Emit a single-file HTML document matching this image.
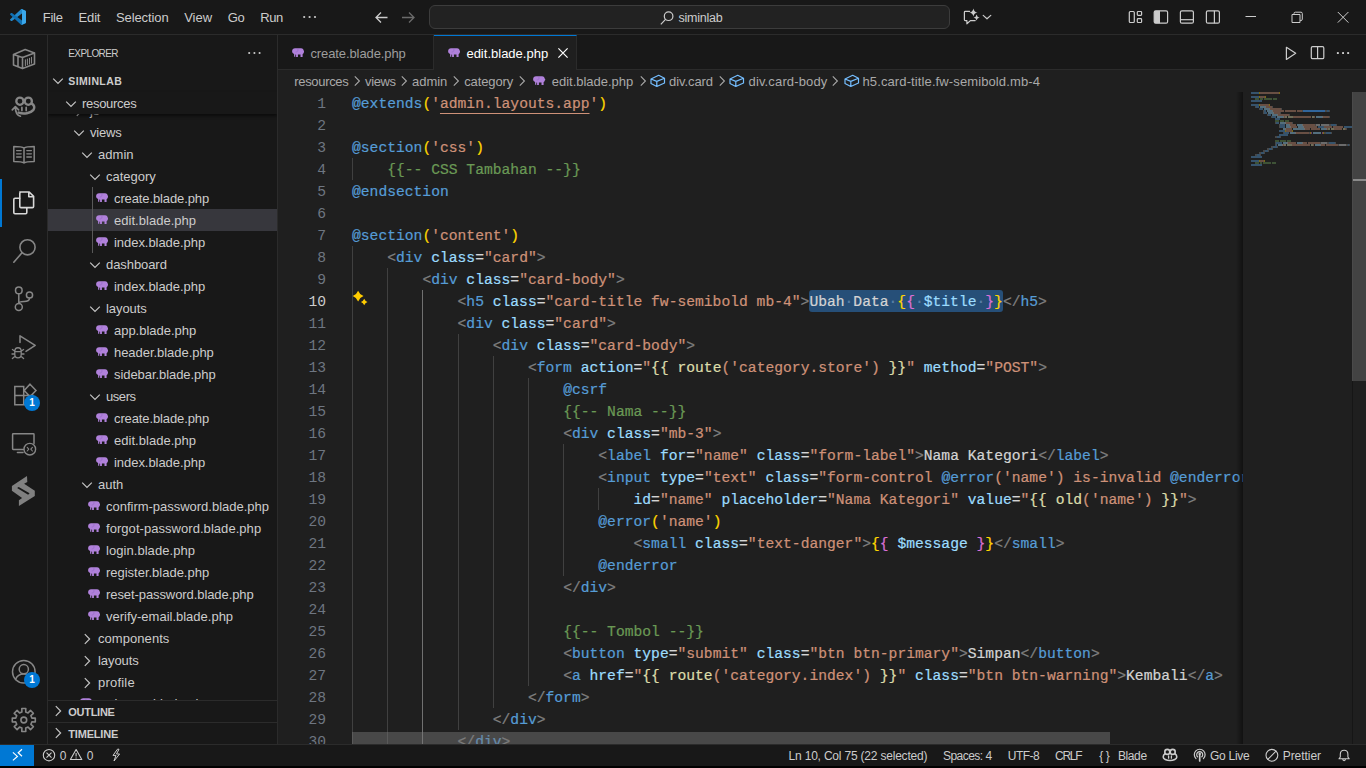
<!DOCTYPE html>
<html lang="en"><head><meta charset="utf-8"><title>edit.blade.php - siminlab - Visual Studio Code</title>
<style>
*{box-sizing:border-box}
html,body{margin:0;padding:0}
body{width:1366px;height:768px;overflow:hidden;background:#181818;position:relative;font-family:"Liberation Sans",sans-serif;font-size:13px;color:#cccccc;-webkit-font-smoothing:antialiased}
.abs{position:absolute}
svg{display:block}
/* title bar */
#title{position:absolute;left:0;top:0;width:1366px;height:35px;background:#181818;border-bottom:1px solid #2b2b2b}
#title .menu{position:absolute;top:0;height:34px;line-height:34px;color:#cccccc;font-size:13px;white-space:pre}
#cmd{position:absolute;left:429px;top:5px;width:521px;height:24px;border:1px solid #3c3c3c;border-radius:6px;background:#222222}
#cmd{line-height:24px;color:#cccccc}
/* activity bar */
#act{position:absolute;left:0;top:35px;width:48px;height:709px;background:#181818;border-right:1px solid #2b2b2b}
#act .it{position:absolute;left:0;width:48px;height:48px}
#act .it svg{position:absolute;left:12px;top:12px;width:24px;height:24px}
.badge{position:absolute;width:16px;height:16px;border-radius:8px;background:#0078d4;color:#fff;font-size:10px;font-weight:bold;line-height:16px;text-align:center}
/* sidebar */
#side{position:absolute;left:48px;top:35px;width:230px;height:709px;background:#181818;border-right:1px solid #2b2b2b;overflow:hidden}
.trow{position:absolute;left:0;width:229px;height:22px;line-height:22px;white-space:pre;color:#cccccc}
.trow.selrow{background:#37373d}
.trow span{position:absolute;top:0}
.tchev svg,.chev{width:16px;height:16px}
.tchev{top:3.5px !important}
.tico{top:6px !important}
.ele{width:12.5px;height:9.2px}
.tlabel{font-size:13px}
.hdr{position:absolute;font-size:11px;font-weight:bold;color:#cccccc;white-space:pre;transform-origin:0 50%}
.t{position:absolute;top:0;white-space:pre}
.hrow{position:absolute;left:0;width:229px;white-space:pre}
#treeclip{position:absolute;left:0;top:0;width:229px;height:665px;overflow:hidden}
#sticky{position:absolute;left:0;top:57px;width:229px;height:22px;background:#181818;box-shadow:0 2px 3px rgba(0,0,0,.55)}
.menus{position:absolute;left:0;top:1px;height:34px;line-height:34px;color:#cccccc}
/* tabs */
#tabs{position:absolute;left:278px;top:35px;width:1088px;height:35px;background:#181818;border-bottom:1px solid #2b2b2b}
.tab{position:absolute;top:0;height:35px;border-right:1px solid #2b2b2b;line-height:37px;white-space:pre}
.tab.active{background:#1f1f1f;border-top:1px solid #0078d4;height:36px;color:#ffffff}
.tab span{position:absolute;top:0}
/* breadcrumbs */
#crumbs{position:absolute;left:278px;top:70px;width:1088px;height:22px;background:#1f1f1f;line-height:24px;color:#a9a9a9;white-space:pre}
#crumbs span{position:absolute;top:0}
#crumbs svg{position:absolute}
/* editor */
#editor{position:absolute;left:278px;top:92px;width:1088px;height:652px;background:#1f1f1f;overflow:hidden}
.row{position:absolute;left:0;width:965px;height:22px;line-height:22px;overflow:hidden;font-family:"Liberation Mono",monospace;font-size:14.66px;white-space:pre;-webkit-text-stroke:.22px}
.ln{position:absolute;left:0;top:1px;width:48px;text-align:right;color:#6e7681;-webkit-text-stroke:0}
.ln.act{color:#cccccc}
.code{position:absolute;top:1px}
.ig{position:absolute;top:0;width:1px;height:22px;background:#404040}
.iga{background:#707070}
.selbg{position:absolute;top:0;height:22px;background:#264f78;border-radius:3px}
.ws{font-style:normal;color:#5a7fa6}
.ul{text-decoration:underline;text-decoration-thickness:1px;text-underline-offset:5px}
.mm{position:absolute;left:973px;top:0}
#vtrack{position:absolute;left:1074px;top:0;width:1px;height:652px;background:#161616}
#vscroll{position:absolute;left:1074px;top:0;width:14px;height:289px;background:#434343;border-left:1px solid #4a4a4a}
#vmark{position:absolute;left:1075px;top:87px;width:13px;height:2px;background:#8a8a8a}
#mmshadow{position:absolute;left:958px;top:0;width:7px;height:652px;background:linear-gradient(90deg,rgba(0,0,0,0),rgba(0,0,0,.45))}
#hscroll{position:absolute;left:74px;top:640px;width:758px;height:12px;background:rgba(121,121,121,.46)}
/* status */
#status{position:absolute;left:0;top:744px;width:1366px;height:22px;background:#181818;border-top:1px solid #2b2b2b;font-size:12px;line-height:23px;color:#cccccc;white-space:pre}
#status span{position:absolute;top:0}
#status svg{position:absolute}
#remote{position:absolute;left:0;top:0;width:34px;height:21px;background:#0078d4}
#bottom{position:absolute;left:0;top:766px;width:1366px;height:2px;background:#000}
</style></head><body>

<div id="title">
  <svg class="abs" style="left:10px;top:9px" width="16" height="16" viewBox="0 0 100 100"><path fill="#2489ca" d="M96.5 10.8 75.9 .9c-2.4-1.2-5.200-.7-7.100 1.200L1.500 63.500c-1.800 1.700-1.800 4.500 0 6.200l5.500 5c1.500 1.300 3.700 1.400 5.300 .2l81.100-61.500c2.700-2.100 6.600-.1 6.600 3.300v-.2c0-2.400-1.400-4.600-3.500-5.700z"/><path fill="#1070b3" d="M96.500 89.200 75.900 99.100c-2.400 1.200-5.200 .7-7.100-1.200L1.500 36.500c-1.800-1.700-1.800-4.500 0-6.200l5.500-5c1.500-1.300 3.700-1.400 5.300-.2l81.100 61.500c2.700 2.100 6.600 .1 6.600-3.300v.2c0 2.400-1.400 4.600-3.500 5.700z"/><path fill="#3aa7ea" d="M75.900 99.100c-2.400 1.200-5.200 .7-7.100-1.200 2.300 2.300 6.300 .7 6.300-2.600V4.700c0-3.300-4-4.900-6.300-2.600 1.900-1.900 4.700-2.400 7.100-1.200l20.600 9.900c2.200 1 3.500 3.200 3.500 5.600v67.200c0 2.400-1.400 4.600-3.500 5.600z"/></svg>
  <div class="menus"><span class="t" style="left:42.8px;font-size:13px;font-weight:normal;letter-spacing:-0.263px;">File</span><span class="t" style="left:78.6px;font-size:13px;font-weight:normal;letter-spacing:-0.177px;">Edit</span><span class="t" style="left:116px;font-size:13px;font-weight:normal;letter-spacing:-0.109px;">Selection</span><span class="t" style="left:184.2px;font-size:13px;font-weight:normal;letter-spacing:-0.038px;">View</span><span class="t" style="left:227.7px;font-size:13px;font-weight:normal;letter-spacing:-0.322px;">Go</span><span class="t" style="left:260.3px;font-size:13px;font-weight:normal;letter-spacing:-0.486px;">Run</span></div>
  <svg class="abs" style="left:302px;top:15px" width="16" height="4" viewBox="0 0 16 4"><circle cx="2.200" cy="2" r="1.100" fill="#ccc"/><circle cx="7.600" cy="2" r="1.100" fill="#ccc"/><circle cx="13" cy="2" r="1.100" fill="#ccc"/></svg>
  <svg class="abs" style="left:372px;top:10px" width="60" height="16" viewBox="372 10 60 16" fill="none" stroke-width="1.300"><path stroke="#cccccc" d="M387.500 17.500H376.500M381 12.500l-5 5 5 5"/><path stroke="#6b6b6b" d="M402 17.500H413.500M409 12.500l5 5-5 5"/></svg>
  <div id="cmd"><svg class="abs" style="left:229px;top:4px" width="16" height="16" viewBox="0 0 16 16" fill="none" stroke="#cccccc" stroke-width="1.200"><circle cx="9.600" cy="6.200" r="4.300"/><path d="M6.500 9.400 1.800 14.400"/></svg><span class="t" style="left:248.5px;font-size:12.5px;font-weight:normal;letter-spacing:-0.232px;">siminlab</span></div>
  <svg class="abs" style="left:960px;top:6px" width="36" height="22" viewBox="960 6 36 22" fill="none" stroke="#cccccc" stroke-width="1.2" stroke-linejoin="round" stroke-linecap="round"><path d="M969.6 11.4H965.2Q964.4 11.4 964.4 12.2V19.800Q964.4 20.600 965.2 20.600H966.9V23.800L970.400 20.600H975.2"/><path fill="#cccccc" stroke="none" d="M973.4 8.40Q973.97 11.93 977.50 12.5Q973.97 13.07 973.4 16.60Q972.83 13.07 969.30 12.5Q972.83 11.93 973.4 8.40ZM976.6 14.50Q977.02 17.08 979.60 17.5Q977.02 17.92 976.6 20.50Q976.18 17.92 973.60 17.5Q976.18 17.08 976.6 14.50Z"/><path d="M983.2 15.400 987 18.800 990.800 15.400"/></svg>
  <svg class="abs" style="left:1126px;top:8px" width="98" height="18" viewBox="1126 8 98 18" fill="none" stroke="#cccccc" stroke-width="1.200"><rect x="1129.300" y="11.500" width="5" height="11" rx="1"/><rect x="1137.300" y="11.500" width="4.300" height="3.800" rx=".8"/><rect x="1137.300" y="18.700" width="4.300" height="3.800" rx=".8"/>
  <rect x="1154.200" y="10.800" width="13.400" height="12.400" rx="1.500"/><path fill="#cccccc" stroke="none" d="M1154.200 12.300Q1154.200 10.800 1155.700 10.800H1160V23.200H1155.700Q1154.200 23.200 1154.200 21.700Z"/>
  <rect x="1180.400" y="10.800" width="13" height="12.400" rx="1.500"/><path d="M1180.400 19.700H1193.400"/>
  <rect x="1206.400" y="10.800" width="13" height="12.400" rx="1.500"/><path d="M1214.400 10.800V23.200"/></svg>
  <svg class="abs" style="left:1240px;top:8px" width="116" height="18" viewBox="1240 8 116 18" fill="none" stroke="#cccccc" stroke-width="1"><path d="M1245.500 16.500H1256"/><path d="M1292 14.500H1300V22.500H1292Z M1294 14.300V13.500Q1294 12.200 1295.300 12.200H1301Q1302.300 12.200 1302.300 13.500V19.200Q1302.300 20.500 1301 20.500H1300.200" stroke-linejoin="round"/><path d="M1337.800 12 1348.400 22.600M1348.400 12 1337.800 22.600"/></svg>
</div>

<div id="act"><div class="abs" style="left:0;top:144px;width:2px;height:48px;background:#0078d4"></div><svg class="abs" style="left:0;top:0" width="48" height="709" viewBox="0 35 48 709" fill="none" stroke="#868686" stroke-width="1.5" stroke-linejoin="round" stroke-linecap="round">
<!-- container -->
<path d="M13.5 54.6 25.2 49.6 34.5 52.9 34.5 63.9 22.5 68.6 13.5 65.1Z M13.5 54.6 22.5 57.4 34.5 52.9 M22.5 57.4V68.6 M18 56.2V66.8" stroke-width="1.6"/>
<path d="M25.4 59.8V65.4 M27.4 59V64.7 M29.5 58.2V63.9 M31.5 57.4V63.1" stroke-width="1.1"/>
<!-- copilot w/ arrow -->
<circle cx="19.9" cy="101.2" r="3.6" stroke-width="2.300"/><circle cx="28.3" cy="101.2" r="3.6" stroke-width="2.300"/>
<path d="M21.9 107.4V110.6 M26.2 107.4V110.6" stroke-width="1.7"/>
<path d="M31.8 103.6C34.2 105 35 107.600 33.500 109.800 30.800 113.400 23.500 114.200 18.600 112.600" stroke-width="2.500"/>
<path d="M12.300 109.800 15.400 106.700 18.600 109.800 M15.400 107C15.400 112 16.800 115.300 20.400 116.200" stroke-width="1.7"/>
<!-- book -->
<path d="M24 148.200V162.600 M24 148.200C22.500 147 20 146.600 13.800 146.600V161.400C20 161.400 22.500 161.700 24 163 25.500 161.700 28 161.400 34.200 161.400V146.600C28 146.600 25.500 147 24 148.200Z" stroke-width="1.5"/>
<path d="M16.600 150.600H21.200 M16.600 153.800H21.200 M16.600 157H21.200 M26.800 150.600H31.400 M26.800 153.800H31.400 M26.800 157H31.400" stroke-width="1.3"/>
<!-- files (active) -->
<g stroke="#d7d7d7" stroke-width="1.6">
<path d="M19.800 192H29.200L33.600 196.400V206.400Q33.600 207.600 32.400 207.600H21Q19.800 207.600 19.800 206.400V193.200Q19.800 192 21 192Z M28.800 192.200V196.800H33.400"/>
<path d="M19.600 198.200H15Q13.800 198.200 13.800 199.400V212.600Q13.800 213.800 15 213.800H25.600Q26.800 213.800 26.800 212.600V207.800"/>
</g>
<!-- search -->
<circle cx="27.500" cy="247.300" r="7.600" stroke-width="1.600"/><path d="M22 252.800 13.800 262.200" stroke-width="1.600"/>
<!-- source control -->
<circle cx="18.800" cy="290.400" r="3.300"/><circle cx="29.500" cy="295" r="3.100"/><circle cx="18.800" cy="307" r="3.500"/>
<path d="M18.800 293.800V303.400 M29.500 298.200C29.500 301 27 301.400 24 301.400 21 301.400 18.800 302 18.800 303.400"/>
<!-- debug -->
<path d="M20 342.500V335.800L35.200 345.300 26 351.400" stroke-width="1.500"/>
<path d="M14.800 351.500C14.800 346.500 21.200 346.500 21.200 351.500V354.500C21.200 359 14.800 359 14.800 354.500Z M14.800 351.600H21.200 M12.400 349.500 14.600 351 M23.600 349.500 21.400 351 M12 354H14.600 M24 354H21.400 M12.400 358.500 14.800 356.500 M23.600 358.500 21.200 356.500" stroke-width="1.300"/>
<!-- extensions -->
<path d="M14.800 386.600H23.700V395.600H14.800Z M14.800 395.600V404.800H23.700V395.600 M23.700 395.600H32.800V404.800H23.700 M30 384.200 36 390.400 30 396.600 24.200 390.400Z" stroke-width="1.500" stroke-linejoin="miter"/>
<!-- remote explorer -->
<path d="M23.500 449.400H13.200Q12.600 449.400 12.600 448.800V434.400Q12.600 433.800 13.200 433.800H33.400Q34 433.800 34 434.400V443.500 M17.400 452.600H23" stroke-width="1.500"/>
<circle cx="29.800" cy="449.200" r="5.800" stroke-width="1.400"/>
<path d="M27.200 447.400 28.800 449.200 27.200 451 M32.400 447.400 30.800 449.200 32.400 451" stroke-width="1.100"/>
<!-- S logo -->
<path fill="#808080" stroke="none" d="M27 476 27.300 482 24.100 483.800 34.800 490.800 34.800 496 18.900 505.900 18.900 500.200 22.100 498.100 11.900 490.800 11.900 486.100Z M17.100 488 28.100 494.700 29.600 493.200 18.700 486.900Z" fill-rule="evenodd"/>
<!-- account -->
<circle cx="23.800" cy="671.800" r="11.300" stroke-width="1.500"/><circle cx="23.800" cy="669.200" r="4.600" stroke-width="1.500"/>
<path d="M15.500 679.500C17 675.800 20 674 23.800 674 27.600 674 30.600 675.800 32.100 679.500" stroke-width="1.500"/>
<!-- gear -->
<circle cx="23.800" cy="720" r="2.900" stroke-width="1.600"/>
<path id="gear" stroke-width="1.600" stroke-linejoin="round" d="M21.9 711.9 L21.8 708.5 L25.8 708.5 L25.7 711.9 L28.1 712.9 L30.5 710.4 L33.4 713.3 L30.9 715.7 L31.9 718.1 L35.3 718.0 L35.3 722.0 L31.9 721.9 L30.9 724.3 L33.4 726.7 L30.5 729.6 L28.1 727.1 L25.7 728.1 L25.8 731.5 L21.8 731.5 L21.9 728.1 L19.5 727.1 L17.1 729.6 L14.2 726.7 L16.7 724.3 L15.7 721.9 L12.3 722.0 L12.3 718.0 L15.7 718.1 L16.7 715.7 L14.2 713.3 L17.1 710.4 L19.5 712.9Z"/>
</svg>

<div class="badge" style="left:24px;top:360px">1</div><div class="badge" style="left:24px;top:637px">1</div></div>

<div id="side">
  <div id="treeclip">
<div class="trow" style="top:64px"><span class="tchev" style="left:22.5px"><svg class="chev" viewBox="0 0 16 16"><path fill="none" stroke="#c5c5c5" stroke-width="1.2" d="M5.8 3.2 10.6 8l-4.8 4.8"/></svg></span><span class="t" style="left:42px;font-size:13px;font-weight:normal;letter-spacing:0.055px;top:1px">js</span></div>
<div class="trow" style="top:86px"><span class="tchev" style="left:22.5px"><svg class="chev" viewBox="0 0 16 16"><path fill="none" stroke="#c5c5c5" stroke-width="1.2" d="M3.2 5.6 8 10.4l4.8-4.8"/></svg></span><span class="t" style="left:42px;font-size:13px;font-weight:normal;letter-spacing:-0.203px;top:1px">views</span></div>
<div class="trow" style="top:108px"><span class="tchev" style="left:30.5px"><svg class="chev" viewBox="0 0 16 16"><path fill="none" stroke="#c5c5c5" stroke-width="1.2" d="M3.2 5.6 8 10.4l4.8-4.8"/></svg></span><span class="t" style="left:50px;font-size:13px;font-weight:normal;letter-spacing:0.036px;top:1px">admin</span></div>
<div class="trow" style="top:130px"><span class="tchev" style="left:38.5px"><svg class="chev" viewBox="0 0 16 16"><path fill="none" stroke="#c5c5c5" stroke-width="1.2" d="M3.2 5.6 8 10.4l4.8-4.8"/></svg></span><span class="t" style="left:58px;font-size:13px;font-weight:normal;letter-spacing:-0.022px;top:1px">category</span></div>
<div class="trow" style="top:152px"><span class="tico" style="left:47.5px"><svg class="ele" viewBox="0 0 12.5 9" preserveAspectRatio="none"><path fill="#b081db" d="M3 .2H9C10.8 .2 11.6 1.4 11.8 2.8L12.4 3.6 11.8 4.4C11.6 5.2 11.2 5.8 10.6 6.2V8.8H8.5V6.4H5.9V8.8H4.1V6.5L3.3 6.3V8.5H2.1V5.9C.9 5.3 .1 4.3 .1 3.1 .1 1.5 1.4 .2 3 .2Z"/><path fill="none" stroke="#9166c2" stroke-width=".55" d="M5.9 1C6.3 2.6 5.8 3.9 3.6 4"/></svg></span><span class="t" style="left:66px;font-size:13px;font-weight:normal;letter-spacing:-0.116px;top:1px">create.blade.php</span></div>
<div class="trow selrow" style="top:174px"><span class="tico" style="left:47.5px"><svg class="ele" viewBox="0 0 12.5 9" preserveAspectRatio="none"><path fill="#b081db" d="M3 .2H9C10.8 .2 11.6 1.4 11.8 2.8L12.4 3.6 11.8 4.4C11.6 5.2 11.2 5.8 10.6 6.2V8.8H8.5V6.4H5.9V8.8H4.1V6.5L3.3 6.3V8.5H2.1V5.9C.9 5.3 .1 4.3 .1 3.1 .1 1.5 1.4 .2 3 .2Z"/><path fill="none" stroke="#9166c2" stroke-width=".55" d="M5.9 1C6.3 2.6 5.8 3.9 3.6 4"/></svg></span><span class="t" style="left:66px;font-size:13px;font-weight:normal;letter-spacing:0.029px;top:1px">edit.blade.php</span></div>
<div class="trow" style="top:196px"><span class="tico" style="left:47.5px"><svg class="ele" viewBox="0 0 12.5 9" preserveAspectRatio="none"><path fill="#b081db" d="M3 .2H9C10.8 .2 11.6 1.4 11.8 2.8L12.4 3.6 11.8 4.4C11.6 5.2 11.2 5.8 10.6 6.2V8.8H8.5V6.4H5.9V8.8H4.1V6.5L3.3 6.3V8.5H2.1V5.9C.9 5.3 .1 4.3 .1 3.1 .1 1.5 1.4 .2 3 .2Z"/><path fill="none" stroke="#9166c2" stroke-width=".55" d="M5.9 1C6.3 2.6 5.8 3.9 3.6 4"/></svg></span><span class="t" style="left:66px;font-size:13px;font-weight:normal;letter-spacing:-0.048px;top:1px">index.blade.php</span></div>
<div class="trow" style="top:218px"><span class="tchev" style="left:38.5px"><svg class="chev" viewBox="0 0 16 16"><path fill="none" stroke="#c5c5c5" stroke-width="1.2" d="M3.2 5.6 8 10.4l4.8-4.8"/></svg></span><span class="t" style="left:58px;font-size:13px;font-weight:normal;letter-spacing:-0.073px;top:1px">dashboard</span></div>
<div class="trow" style="top:240px"><span class="tico" style="left:47.5px"><svg class="ele" viewBox="0 0 12.5 9" preserveAspectRatio="none"><path fill="#b081db" d="M3 .2H9C10.8 .2 11.6 1.4 11.8 2.8L12.4 3.6 11.8 4.4C11.6 5.2 11.2 5.8 10.6 6.2V8.8H8.5V6.4H5.9V8.8H4.1V6.5L3.3 6.3V8.5H2.1V5.9C.9 5.3 .1 4.3 .1 3.1 .1 1.5 1.4 .2 3 .2Z"/><path fill="none" stroke="#9166c2" stroke-width=".55" d="M5.9 1C6.3 2.6 5.8 3.9 3.6 4"/></svg></span><span class="t" style="left:66px;font-size:13px;font-weight:normal;letter-spacing:-0.048px;top:1px">index.blade.php</span></div>
<div class="trow" style="top:262px"><span class="tchev" style="left:38.5px"><svg class="chev" viewBox="0 0 16 16"><path fill="none" stroke="#c5c5c5" stroke-width="1.2" d="M3.2 5.6 8 10.4l4.8-4.8"/></svg></span><span class="t" style="left:58px;font-size:13px;font-weight:normal;letter-spacing:-0.058px;top:1px">layouts</span></div>
<div class="trow" style="top:284px"><span class="tico" style="left:47.5px"><svg class="ele" viewBox="0 0 12.5 9" preserveAspectRatio="none"><path fill="#b081db" d="M3 .2H9C10.8 .2 11.6 1.4 11.8 2.8L12.4 3.6 11.8 4.4C11.6 5.2 11.2 5.8 10.6 6.2V8.8H8.5V6.4H5.9V8.8H4.1V6.5L3.3 6.3V8.5H2.1V5.9C.9 5.3 .1 4.3 .1 3.1 .1 1.5 1.4 .2 3 .2Z"/><path fill="none" stroke="#9166c2" stroke-width=".55" d="M5.9 1C6.3 2.6 5.8 3.9 3.6 4"/></svg></span><span class="t" style="left:66px;font-size:13px;font-weight:normal;letter-spacing:-0.025px;top:1px">app.blade.php</span></div>
<div class="trow" style="top:306px"><span class="tico" style="left:47.5px"><svg class="ele" viewBox="0 0 12.5 9" preserveAspectRatio="none"><path fill="#b081db" d="M3 .2H9C10.8 .2 11.6 1.4 11.8 2.8L12.4 3.6 11.8 4.4C11.6 5.2 11.2 5.8 10.6 6.2V8.8H8.5V6.4H5.9V8.8H4.1V6.5L3.3 6.3V8.5H2.1V5.9C.9 5.3 .1 4.3 .1 3.1 .1 1.5 1.4 .2 3 .2Z"/><path fill="none" stroke="#9166c2" stroke-width=".55" d="M5.9 1C6.3 2.6 5.8 3.9 3.6 4"/></svg></span><span class="t" style="left:66px;font-size:13px;font-weight:normal;letter-spacing:-0.043px;top:1px">header.blade.php</span></div>
<div class="trow" style="top:328px"><span class="tico" style="left:47.5px"><svg class="ele" viewBox="0 0 12.5 9" preserveAspectRatio="none"><path fill="#b081db" d="M3 .2H9C10.8 .2 11.6 1.4 11.8 2.8L12.4 3.6 11.8 4.4C11.6 5.2 11.2 5.8 10.6 6.2V8.8H8.5V6.4H5.9V8.8H4.1V6.5L3.3 6.3V8.5H2.1V5.9C.9 5.3 .1 4.3 .1 3.1 .1 1.5 1.4 .2 3 .2Z"/><path fill="none" stroke="#9166c2" stroke-width=".55" d="M5.9 1C6.3 2.6 5.8 3.9 3.6 4"/></svg></span><span class="t" style="left:66px;font-size:13px;font-weight:normal;letter-spacing:-0.062px;top:1px">sidebar.blade.php</span></div>
<div class="trow" style="top:350px"><span class="tchev" style="left:38.5px"><svg class="chev" viewBox="0 0 16 16"><path fill="none" stroke="#c5c5c5" stroke-width="1.2" d="M3.2 5.6 8 10.4l4.8-4.8"/></svg></span><span class="t" style="left:58px;font-size:13px;font-weight:normal;letter-spacing:-0.439px;top:1px">users</span></div>
<div class="trow" style="top:372px"><span class="tico" style="left:47.5px"><svg class="ele" viewBox="0 0 12.5 9" preserveAspectRatio="none"><path fill="#b081db" d="M3 .2H9C10.8 .2 11.6 1.4 11.8 2.8L12.4 3.6 11.8 4.4C11.6 5.2 11.2 5.8 10.6 6.2V8.8H8.5V6.4H5.9V8.8H4.1V6.5L3.3 6.3V8.5H2.1V5.9C.9 5.3 .1 4.3 .1 3.1 .1 1.5 1.4 .2 3 .2Z"/><path fill="none" stroke="#9166c2" stroke-width=".55" d="M5.9 1C6.3 2.6 5.8 3.9 3.6 4"/></svg></span><span class="t" style="left:66px;font-size:13px;font-weight:normal;letter-spacing:-0.116px;top:1px">create.blade.php</span></div>
<div class="trow" style="top:394px"><span class="tico" style="left:47.5px"><svg class="ele" viewBox="0 0 12.5 9" preserveAspectRatio="none"><path fill="#b081db" d="M3 .2H9C10.8 .2 11.6 1.4 11.8 2.8L12.4 3.6 11.8 4.4C11.6 5.2 11.2 5.8 10.6 6.2V8.8H8.5V6.4H5.9V8.8H4.1V6.5L3.3 6.3V8.5H2.1V5.9C.9 5.3 .1 4.3 .1 3.1 .1 1.5 1.4 .2 3 .2Z"/><path fill="none" stroke="#9166c2" stroke-width=".55" d="M5.9 1C6.3 2.6 5.8 3.9 3.6 4"/></svg></span><span class="t" style="left:66px;font-size:13px;font-weight:normal;letter-spacing:0.029px;top:1px">edit.blade.php</span></div>
<div class="trow" style="top:416px"><span class="tico" style="left:47.5px"><svg class="ele" viewBox="0 0 12.5 9" preserveAspectRatio="none"><path fill="#b081db" d="M3 .2H9C10.8 .2 11.6 1.4 11.8 2.8L12.4 3.6 11.8 4.4C11.6 5.2 11.2 5.8 10.6 6.2V8.8H8.5V6.4H5.9V8.8H4.1V6.5L3.3 6.3V8.5H2.1V5.9C.9 5.3 .1 4.3 .1 3.1 .1 1.5 1.4 .2 3 .2Z"/><path fill="none" stroke="#9166c2" stroke-width=".55" d="M5.9 1C6.3 2.6 5.8 3.9 3.6 4"/></svg></span><span class="t" style="left:66px;font-size:13px;font-weight:normal;letter-spacing:-0.048px;top:1px">index.blade.php</span></div>
<div class="trow" style="top:438px"><span class="tchev" style="left:30.5px"><svg class="chev" viewBox="0 0 16 16"><path fill="none" stroke="#c5c5c5" stroke-width="1.2" d="M3.2 5.6 8 10.4l4.8-4.8"/></svg></span><span class="t" style="left:50px;font-size:13px;font-weight:normal;letter-spacing:-0.028px;top:1px">auth</span></div>
<div class="trow" style="top:460px"><span class="tico" style="left:39.5px"><svg class="ele" viewBox="0 0 12.5 9" preserveAspectRatio="none"><path fill="#b081db" d="M3 .2H9C10.8 .2 11.6 1.4 11.8 2.8L12.4 3.6 11.8 4.4C11.6 5.2 11.2 5.8 10.6 6.2V8.8H8.5V6.4H5.9V8.8H4.1V6.5L3.3 6.3V8.5H2.1V5.9C.9 5.3 .1 4.3 .1 3.1 .1 1.5 1.4 .2 3 .2Z"/><path fill="none" stroke="#9166c2" stroke-width=".55" d="M5.9 1C6.3 2.6 5.8 3.9 3.6 4"/></svg></span><span class="t" style="left:58px;font-size:13px;font-weight:normal;letter-spacing:-0.016px;top:1px">confirm-password.blade.php</span></div>
<div class="trow" style="top:482px"><span class="tico" style="left:39.5px"><svg class="ele" viewBox="0 0 12.5 9" preserveAspectRatio="none"><path fill="#b081db" d="M3 .2H9C10.8 .2 11.6 1.4 11.8 2.8L12.4 3.6 11.8 4.4C11.6 5.2 11.2 5.8 10.6 6.2V8.8H8.5V6.4H5.9V8.8H4.1V6.5L3.3 6.3V8.5H2.1V5.9C.9 5.3 .1 4.3 .1 3.1 .1 1.5 1.4 .2 3 .2Z"/><path fill="none" stroke="#9166c2" stroke-width=".55" d="M5.9 1C6.3 2.6 5.8 3.9 3.6 4"/></svg></span><span class="t" style="left:58px;font-size:13px;font-weight:normal;letter-spacing:0.050px;top:1px">forgot-password.blade.php</span></div>
<div class="trow" style="top:504px"><span class="tico" style="left:39.5px"><svg class="ele" viewBox="0 0 12.5 9" preserveAspectRatio="none"><path fill="#b081db" d="M3 .2H9C10.8 .2 11.6 1.4 11.8 2.8L12.4 3.6 11.8 4.4C11.6 5.2 11.2 5.8 10.6 6.2V8.8H8.5V6.4H5.9V8.8H4.1V6.5L3.3 6.3V8.5H2.1V5.9C.9 5.3 .1 4.3 .1 3.1 .1 1.5 1.4 .2 3 .2Z"/><path fill="none" stroke="#9166c2" stroke-width=".55" d="M5.9 1C6.3 2.6 5.8 3.9 3.6 4"/></svg></span><span class="t" style="left:58px;font-size:13px;font-weight:normal;letter-spacing:0.053px;top:1px">login.blade.php</span></div>
<div class="trow" style="top:526px"><span class="tico" style="left:39.5px"><svg class="ele" viewBox="0 0 12.5 9" preserveAspectRatio="none"><path fill="#b081db" d="M3 .2H9C10.8 .2 11.6 1.4 11.8 2.8L12.4 3.6 11.8 4.4C11.6 5.2 11.2 5.8 10.6 6.2V8.8H8.5V6.4H5.9V8.8H4.1V6.5L3.3 6.3V8.5H2.1V5.9C.9 5.3 .1 4.3 .1 3.1 .1 1.5 1.4 .2 3 .2Z"/><path fill="none" stroke="#9166c2" stroke-width=".55" d="M5.9 1C6.3 2.6 5.8 3.9 3.6 4"/></svg></span><span class="t" style="left:58px;font-size:13px;font-weight:normal;letter-spacing:-0.014px;top:1px">register.blade.php</span></div>
<div class="trow" style="top:548px"><span class="tico" style="left:39.5px"><svg class="ele" viewBox="0 0 12.5 9" preserveAspectRatio="none"><path fill="#b081db" d="M3 .2H9C10.8 .2 11.6 1.4 11.8 2.8L12.4 3.6 11.8 4.4C11.6 5.2 11.2 5.8 10.6 6.2V8.8H8.5V6.4H5.9V8.8H4.1V6.5L3.3 6.3V8.5H2.1V5.9C.9 5.3 .1 4.3 .1 3.1 .1 1.5 1.4 .2 3 .2Z"/><path fill="none" stroke="#9166c2" stroke-width=".55" d="M5.9 1C6.3 2.6 5.8 3.9 3.6 4"/></svg></span><span class="t" style="left:58px;font-size:13px;font-weight:normal;letter-spacing:-0.083px;top:1px">reset-password.blade.php</span></div>
<div class="trow" style="top:570px"><span class="tico" style="left:39.5px"><svg class="ele" viewBox="0 0 12.5 9" preserveAspectRatio="none"><path fill="#b081db" d="M3 .2H9C10.8 .2 11.6 1.4 11.8 2.8L12.4 3.6 11.8 4.4C11.6 5.2 11.2 5.8 10.6 6.2V8.8H8.5V6.4H5.9V8.8H4.1V6.5L3.3 6.3V8.5H2.1V5.9C.9 5.3 .1 4.3 .1 3.1 .1 1.5 1.4 .2 3 .2Z"/><path fill="none" stroke="#9166c2" stroke-width=".55" d="M5.9 1C6.3 2.6 5.8 3.9 3.6 4"/></svg></span><span class="t" style="left:58px;font-size:13px;font-weight:normal;letter-spacing:-0.004px;top:1px">verify-email.blade.php</span></div>
<div class="trow" style="top:592px"><span class="tchev" style="left:30.5px"><svg class="chev" viewBox="0 0 16 16"><path fill="none" stroke="#c5c5c5" stroke-width="1.2" d="M5.8 3.2 10.6 8l-4.8 4.8"/></svg></span><span class="t" style="left:50px;font-size:13px;font-weight:normal;letter-spacing:0.057px;top:1px">components</span></div>
<div class="trow" style="top:614px"><span class="tchev" style="left:30.5px"><svg class="chev" viewBox="0 0 16 16"><path fill="none" stroke="#c5c5c5" stroke-width="1.2" d="M5.8 3.2 10.6 8l-4.8 4.8"/></svg></span><span class="t" style="left:50px;font-size:13px;font-weight:normal;letter-spacing:-0.058px;top:1px">layouts</span></div>
<div class="trow" style="top:636px"><span class="tchev" style="left:30.5px"><svg class="chev" viewBox="0 0 16 16"><path fill="none" stroke="#c5c5c5" stroke-width="1.2" d="M5.8 3.2 10.6 8l-4.8 4.8"/></svg></span><span class="t" style="left:50px;font-size:13px;font-weight:normal;letter-spacing:0.211px;top:1px">profile</span></div>
<div class="trow" style="top:657px"><span class="tico" style="left:31.5px"><svg class="ele" viewBox="0 0 12.5 9" preserveAspectRatio="none"><path fill="#b081db" d="M3 .2H9C10.8 .2 11.6 1.4 11.8 2.8L12.4 3.6 11.8 4.4C11.6 5.2 11.2 5.8 10.6 6.2V8.8H8.5V6.4H5.9V8.8H4.1V6.5L3.3 6.3V8.5H2.1V5.9C.9 5.3 .1 4.3 .1 3.1 .1 1.5 1.4 .2 3 .2Z"/><path fill="none" stroke="#9166c2" stroke-width=".55" d="M5.9 1C6.3 2.6 5.8 3.9 3.6 4"/></svg></span><span class="t" style="left:50px;font-size:13px;font-weight:normal;letter-spacing:-0.002px;top:1px">welcome.blade.php</span></div>
  <i class="abs" style="left:44px;top:152px;width:1px;height:66px;background:#585858"></i>
  </div>
  <div id="sticky"><div class="trow" style="top:0px"><span class="tchev" style="left:14.5px"><svg class="chev" viewBox="0 0 16 16"><path fill="none" stroke="#c5c5c5" stroke-width="1.2" d="M3.2 5.6 8 10.4l4.8-4.8"/></svg></span><span class="t" style="left:34px;font-size:13px;font-weight:normal;letter-spacing:-0.298px;top:1px">resources</span></div></div>
  <div class="hrow" style="top:0;height:35px;line-height:35px"><span class="t" style="left:20.3px;font-size:10px;font-weight:normal;letter-spacing:-0.609px;color:#cccccc;top:1px">EXPLORER</span><svg class="abs" style="left:199px;top:16px" width="16" height="4" viewBox="0 0 16 4"><circle cx="2.200" cy="2" r="1.050" fill="#ccc"/><circle cx="7.400" cy="2" r="1.050" fill="#ccc"/><circle cx="12.600" cy="2" r="1.050" fill="#ccc"/></svg></div>
  <div class="hrow" style="top:35px;height:22px;line-height:22px"><span class="abs" style="left:2px;top:3px"><svg class="chev" viewBox="0 0 16 16"><path fill="none" stroke="#c5c5c5" stroke-width="1.2" d="M3.2 5.6 8 10.4l4.8-4.8"/></svg></span><span class="t" style="left:20.3px;font-size:10.5px;font-weight:bold;letter-spacing:0.381px;">SIMINLAB</span></div>
  <div class="hrow" style="top:665px;height:22px;line-height:22px;border-top:1px solid #2b2b2b;background:#181818"><span class="abs" style="left:2px;top:2px"><svg class="chev" viewBox="0 0 16 16"><path fill="none" stroke="#c5c5c5" stroke-width="1.2" d="M5.8 3.2 10.6 8l-4.8 4.8"/></svg></span><span class="t" style="left:20.3px;font-size:11px;font-weight:bold;letter-spacing:-0.283px;top:0px">OUTLINE</span></div>
  <div class="hrow" style="top:687px;height:22px;line-height:22px;border-top:1px solid #2b2b2b;background:#181818"><span class="abs" style="left:2px;top:2px"><svg class="chev" viewBox="0 0 16 16"><path fill="none" stroke="#c5c5c5" stroke-width="1.2" d="M5.8 3.2 10.6 8l-4.8 4.8"/></svg></span><span class="t" style="left:20.3px;font-size:11px;font-weight:bold;letter-spacing:-0.193px;top:0px">TIMELINE</span></div>
</div>

<div id="tabs">
  <div class="tab" style="left:0;width:156px;color:#9d9d9d"><span class="abs" style="left:13.500px;top:13px"><svg class="ele" viewBox="0 0 12.5 9" preserveAspectRatio="none"><path fill="#b081db" d="M3 .2H9C10.8 .2 11.6 1.4 11.8 2.8L12.4 3.6 11.8 4.4C11.6 5.2 11.2 5.8 10.6 6.2V8.8H8.5V6.4H5.9V8.8H4.1V6.5L3.3 6.3V8.5H2.1V5.9C.9 5.3 .1 4.3 .1 3.1 .1 1.5 1.4 .2 3 .2Z"/><path fill="none" stroke="#9166c2" stroke-width=".55" d="M5.9 1C6.3 2.6 5.8 3.9 3.6 4"/></svg></span><span class="t" style="left:32.4px;font-size:13px;font-weight:normal;letter-spacing:-0.097px;">create.blade.php</span></div>
  <div class="tab active" style="left:156px;width:143px"><span class="abs" style="left:13.800px;top:12px"><svg class="ele" viewBox="0 0 12.5 9" preserveAspectRatio="none"><path fill="#b081db" d="M3 .2H9C10.8 .2 11.6 1.4 11.8 2.8L12.4 3.6 11.8 4.4C11.6 5.2 11.2 5.8 10.6 6.2V8.8H8.5V6.4H5.9V8.8H4.1V6.5L3.3 6.3V8.5H2.1V5.9C.9 5.3 .1 4.3 .1 3.1 .1 1.5 1.4 .2 3 .2Z"/><path fill="none" stroke="#9166c2" stroke-width=".55" d="M5.9 1C6.3 2.6 5.8 3.9 3.6 4"/></svg></span><span class="t" style="left:32.4px;font-size:13px;font-weight:normal;letter-spacing:0.008px;top:-1px">edit.blade.php</span><svg class="abs" style="left:121px;top:9px" width="16" height="16" viewBox="0 0 16 16"><path stroke="#ffffff" stroke-width="1.200" fill="none" d="M3.400 3.400 12.600 12.600M12.600 3.400 3.400 12.600"/></svg></div>
  <svg class="abs" style="left:1002px;top:8px" width="80" height="20" viewBox="1280 43 80 20" fill="none" stroke="#cccccc" stroke-width="1.200" stroke-linejoin="round"><path d="M1286.400 47.300V59.400L1295.700 53.300Z"/><rect x="1311.300" y="46.700" width="12.500" height="12" rx="1.300"/><path d="M1317.600 46.700V58.700"/><g fill="#cccccc" stroke="none"><rect x="1336.900" y="52.100" width="1.900" height="1.900"/><rect x="1342.100" y="52.100" width="1.900" height="1.900"/><rect x="1347.200" y="52.100" width="1.900" height="1.900"/></g></svg>
</div>

<div id="crumbs"><span class="t" style="left:16.2px;font-size:13px;font-weight:normal;letter-spacing:-0.309px;">resources</span><svg class="abs" style="left:70.5px;top:3px" width="16" height="16" viewBox="0 0 16 16"><path fill="none" stroke="#a9a9a9" stroke-width="1.100" d="M5.800 3.400 10.400 8l-4.600 4.600"/></svg><span class="t" style="left:87px;font-size:13px;font-weight:normal;letter-spacing:-0.363px;">views</span><svg class="abs" style="left:118px;top:3px" width="16" height="16" viewBox="0 0 16 16"><path fill="none" stroke="#a9a9a9" stroke-width="1.100" d="M5.800 3.400 10.400 8l-4.600 4.600"/></svg><span class="t" style="left:134.1px;font-size:13px;font-weight:normal;letter-spacing:-0.044px;">admin</span><svg class="abs" style="left:170.10000000000002px;top:3px" width="16" height="16" viewBox="0 0 16 16"><path fill="none" stroke="#a9a9a9" stroke-width="1.100" d="M5.800 3.400 10.400 8l-4.600 4.600"/></svg><span class="t" style="left:186.2px;font-size:13px;font-weight:normal;letter-spacing:-0.122px;">category</span><svg class="abs" style="left:236px;top:3px" width="16" height="16" viewBox="0 0 16 16"><path fill="none" stroke="#a9a9a9" stroke-width="1.100" d="M5.800 3.400 10.400 8l-4.600 4.600"/></svg><span class="abs" style="left:255.300px;top:6px"><svg class="ele" viewBox="0 0 12.5 9" preserveAspectRatio="none"><path fill="#b081db" d="M3 .2H9C10.8 .2 11.6 1.4 11.8 2.8L12.4 3.6 11.8 4.4C11.6 5.2 11.2 5.8 10.6 6.2V8.8H8.5V6.4H5.9V8.8H4.1V6.5L3.3 6.3V8.5H2.1V5.9C.9 5.3 .1 4.3 .1 3.1 .1 1.5 1.4 .2 3 .2Z"/><path fill="none" stroke="#9166c2" stroke-width=".55" d="M5.9 1C6.3 2.6 5.8 3.9 3.6 4"/></svg></span><span class="t" style="left:273.8px;font-size:13px;font-weight:normal;letter-spacing:-0.021px;">edit.blade.php</span><svg class="abs" style="left:356.6px;top:3px" width="16" height="16" viewBox="0 0 16 16"><path fill="none" stroke="#a9a9a9" stroke-width="1.100" d="M5.800 3.400 10.400 8l-4.600 4.600"/></svg><svg class="abs" style="left:372px;top:3px" width="16" height="16" viewBox="0 0 16 16" fill="none" stroke="#75beff" stroke-width="1.200" stroke-linejoin="round"><path d="M1 6 8.7 2.3 14.5 5.3V10L6.8 13.5 1 10.5Z M1 6 6.8 8.4 14.5 5.3 M6.8 8.4V13.5"/></svg><span class="t" style="left:391px;font-size:13px;font-weight:normal;letter-spacing:-0.070px;">div.card</span><svg class="abs" style="left:435.5px;top:3px" width="16" height="16" viewBox="0 0 16 16"><path fill="none" stroke="#a9a9a9" stroke-width="1.100" d="M5.800 3.400 10.400 8l-4.600 4.600"/></svg><svg class="abs" style="left:451px;top:3px" width="16" height="16" viewBox="0 0 16 16" fill="none" stroke="#75beff" stroke-width="1.200" stroke-linejoin="round"><path d="M1 6 8.7 2.3 14.5 5.3V10L6.8 13.5 1 10.5Z M1 6 6.8 8.4 14.5 5.3 M6.8 8.4V13.5"/></svg><span class="t" style="left:470.5px;font-size:13px;font-weight:normal;letter-spacing:0.148px;">div.card-body</span><svg class="abs" style="left:549px;top:3px" width="16" height="16" viewBox="0 0 16 16"><path fill="none" stroke="#a9a9a9" stroke-width="1.100" d="M5.800 3.400 10.400 8l-4.600 4.600"/></svg><svg class="abs" style="left:565.5px;top:3px" width="16" height="16" viewBox="0 0 16 16" fill="none" stroke="#75beff" stroke-width="1.200" stroke-linejoin="round"><path d="M1 6 8.7 2.3 14.5 5.3V10L6.8 13.5 1 10.5Z M1 6 6.8 8.4 14.5 5.3 M6.8 8.4V13.5"/></svg><span class="t" style="left:584.5px;font-size:13px;font-weight:normal;letter-spacing:0.113px;">h5.card-title.fw-semibold.mb-4</span></div>

<div id="editor">
<div class="row" style="top:0px"><span class="ln">1</span><span class="code" style="left:74.00px"><span style="color:#569cd6">@extends</span><span style="color:#ffd700">(</span><span style="color:#ce9178">'</span><span style="color:#ce9178" class="ul">admin.layouts.app</span><span style="color:#ce9178">'</span><span style="color:#ffd700">)</span></span></div>
<div class="row" style="top:22px"><span class="ln">2</span><span class="code" style="left:74.00px"></span></div>
<div class="row" style="top:44px"><span class="ln">3</span><span class="code" style="left:74.00px"><span style="color:#569cd6">@section</span><span style="color:#ffd700">(</span><span style="color:#ce9178">'css'</span><span style="color:#ffd700">)</span></span></div>
<div class="row" style="top:66px"><span class="ln">4</span><i class="ig" style="left:74px"></i><span class="code" style="left:109.19px"><span style="color:#6a9955">{{-- CSS Tambahan --}}</span></span></div>
<div class="row" style="top:88px"><span class="ln">5</span><span class="code" style="left:74.00px"><span style="color:#569cd6">@endsection</span></span></div>
<div class="row" style="top:110px"><span class="ln">6</span><span class="code" style="left:74.00px"></span></div>
<div class="row" style="top:132px"><span class="ln">7</span><span class="code" style="left:74.00px"><span style="color:#569cd6">@section</span><span style="color:#ffd700">(</span><span style="color:#ce9178">'content'</span><span style="color:#ffd700">)</span></span></div>
<div class="row" style="top:154px"><span class="ln">8</span><i class="ig" style="left:74px"></i><span class="code" style="left:109.19px"><span style="color:#808080">&lt;</span><span style="color:#569cd6">div</span><span style="color:#d4d4d4"> </span><span style="color:#9cdcfe">class</span><span style="color:#d4d4d4">=</span><span style="color:#ce9178">"card"</span><span style="color:#808080">&gt;</span></span></div>
<div class="row" style="top:176px"><span class="ln">9</span><i class="ig" style="left:74px"></i><i class="ig" style="left:109px"></i><span class="code" style="left:144.38px"><span style="color:#808080">&lt;</span><span style="color:#569cd6">div</span><span style="color:#d4d4d4"> </span><span style="color:#9cdcfe">class</span><span style="color:#d4d4d4">=</span><span style="color:#ce9178">"card-body"</span><span style="color:#808080">&gt;</span></span></div>
<div class="row" style="top:198px"><span class="ln act">10</span><i class="ig" style="left:74px"></i><i class="ig" style="left:109px"></i><i class="ig iga" style="left:144px"></i><i class="selbg" style="left:531.44px;width:193.53px"></i><svg style="position:absolute;left:74px;top:0" width="18" height="22" viewBox="352 290 18 22"><path fill="#ffcc00" d="M358.1 290.70000000000005Q359.61 294.59 363.5 296.1Q359.61 297.61 358.1 301.5Q356.59 297.61 352.70000000000005 296.1Q356.59 294.59 358.1 290.70000000000005ZM364.2 298.7Q365.12 301.08 367.5 302Q365.12 302.92 364.2 305.3Q363.28 302.92 360.9 302Q363.28 301.08 364.2 298.7Z"/></svg><span class="code" style="left:179.56px"><span style="color:#808080">&lt;</span><span style="color:#569cd6">h5</span><span style="color:#d4d4d4"> </span><span style="color:#9cdcfe">class</span><span style="color:#d4d4d4">=</span><span style="color:#ce9178">"card-title fw-semibold mb-4"</span><span style="color:#808080">&gt;</span><span><span style="color:#d4d4d4">Ubah<i class="ws">·</i>Data<i class="ws">·</i></span><span style="color:#ffd700">{</span><span style="color:#da70d6">{</span><i class="ws">·</i><span style="color:#9cdcfe">$title</span><i class="ws">·</i><span style="color:#da70d6">}</span><span style="color:#ffd700">}</span></span><span style="color:#808080">&lt;/</span><span style="color:#569cd6">h5</span><span style="color:#808080">&gt;</span></span></div>
<div class="row" style="top:220px"><span class="ln">11</span><i class="ig" style="left:74px"></i><i class="ig" style="left:109px"></i><i class="ig iga" style="left:144px"></i><span class="code" style="left:179.56px"><span style="color:#808080">&lt;</span><span style="color:#569cd6">div</span><span style="color:#d4d4d4"> </span><span style="color:#9cdcfe">class</span><span style="color:#d4d4d4">=</span><span style="color:#ce9178">"card"</span><span style="color:#808080">&gt;</span></span></div>
<div class="row" style="top:242px"><span class="ln">12</span><i class="ig" style="left:74px"></i><i class="ig" style="left:109px"></i><i class="ig iga" style="left:144px"></i><i class="ig" style="left:180px"></i><span class="code" style="left:214.75px"><span style="color:#808080">&lt;</span><span style="color:#569cd6">div</span><span style="color:#d4d4d4"> </span><span style="color:#9cdcfe">class</span><span style="color:#d4d4d4">=</span><span style="color:#ce9178">"card-body"</span><span style="color:#808080">&gt;</span></span></div>
<div class="row" style="top:264px"><span class="ln">13</span><i class="ig" style="left:74px"></i><i class="ig" style="left:109px"></i><i class="ig iga" style="left:144px"></i><i class="ig" style="left:180px"></i><i class="ig" style="left:215px"></i><span class="code" style="left:249.94px"><span style="color:#808080">&lt;</span><span style="color:#569cd6">form</span><span style="color:#d4d4d4"> </span><span style="color:#9cdcfe">action</span><span style="color:#d4d4d4">=</span><span style="color:#ce9178">"</span><span style="color:#dcdcaa">{{ route</span><span style="color:#ce9178">('category.store') </span><span style="color:#dcdcaa">}}</span><span style="color:#ce9178">"</span><span style="color:#d4d4d4"> </span><span style="color:#9cdcfe">method</span><span style="color:#d4d4d4">=</span><span style="color:#ce9178">"POST"</span><span style="color:#808080">&gt;</span></span></div>
<div class="row" style="top:286px"><span class="ln">14</span><i class="ig" style="left:74px"></i><i class="ig" style="left:109px"></i><i class="ig iga" style="left:144px"></i><i class="ig" style="left:180px"></i><i class="ig" style="left:215px"></i><i class="ig" style="left:250px"></i><span class="code" style="left:285.13px"><span style="color:#569cd6">@csrf</span></span></div>
<div class="row" style="top:308px"><span class="ln">15</span><i class="ig" style="left:74px"></i><i class="ig" style="left:109px"></i><i class="ig iga" style="left:144px"></i><i class="ig" style="left:180px"></i><i class="ig" style="left:215px"></i><i class="ig" style="left:250px"></i><span class="code" style="left:285.13px"><span style="color:#6a9955">{{-- Nama --}}</span></span></div>
<div class="row" style="top:330px"><span class="ln">16</span><i class="ig" style="left:74px"></i><i class="ig" style="left:109px"></i><i class="ig iga" style="left:144px"></i><i class="ig" style="left:180px"></i><i class="ig" style="left:215px"></i><i class="ig" style="left:250px"></i><span class="code" style="left:285.13px"><span style="color:#808080">&lt;</span><span style="color:#569cd6">div</span><span style="color:#d4d4d4"> </span><span style="color:#9cdcfe">class</span><span style="color:#d4d4d4">=</span><span style="color:#ce9178">"mb-3"</span><span style="color:#808080">&gt;</span></span></div>
<div class="row" style="top:352px"><span class="ln">17</span><i class="ig" style="left:74px"></i><i class="ig" style="left:109px"></i><i class="ig iga" style="left:144px"></i><i class="ig" style="left:180px"></i><i class="ig" style="left:215px"></i><i class="ig" style="left:250px"></i><i class="ig" style="left:285px"></i><span class="code" style="left:320.32px"><span style="color:#808080">&lt;</span><span style="color:#569cd6">label</span><span style="color:#d4d4d4"> </span><span style="color:#9cdcfe">for</span><span style="color:#d4d4d4">=</span><span style="color:#ce9178">"name"</span><span style="color:#d4d4d4"> </span><span style="color:#9cdcfe">class</span><span style="color:#d4d4d4">=</span><span style="color:#ce9178">"form-label"</span><span style="color:#808080">&gt;</span><span style="color:#d4d4d4">Nama Kategori</span><span style="color:#808080">&lt;/</span><span style="color:#569cd6">label</span><span style="color:#808080">&gt;</span></span></div>
<div class="row" style="top:374px"><span class="ln">18</span><i class="ig" style="left:74px"></i><i class="ig" style="left:109px"></i><i class="ig iga" style="left:144px"></i><i class="ig" style="left:180px"></i><i class="ig" style="left:215px"></i><i class="ig" style="left:250px"></i><i class="ig" style="left:285px"></i><span class="code" style="left:320.32px"><span style="color:#808080">&lt;</span><span style="color:#569cd6">input</span><span style="color:#d4d4d4"> </span><span style="color:#9cdcfe">type</span><span style="color:#d4d4d4">=</span><span style="color:#ce9178">"text"</span><span style="color:#d4d4d4"> </span><span style="color:#9cdcfe">class</span><span style="color:#d4d4d4">=</span><span style="color:#ce9178">"form-control </span><span style="color:#569cd6">@error</span><span style="color:#ce9178">('name') is-invalid </span><span style="color:#569cd6">@enderror</span><span style="color:#ce9178">"</span><span style="color:#808080"></span></span></div>
<div class="row" style="top:396px"><span class="ln">19</span><i class="ig" style="left:74px"></i><i class="ig" style="left:109px"></i><i class="ig iga" style="left:144px"></i><i class="ig" style="left:180px"></i><i class="ig" style="left:215px"></i><i class="ig" style="left:250px"></i><i class="ig" style="left:285px"></i><i class="ig" style="left:320px"></i><span class="code" style="left:355.50px"><span style="color:#9cdcfe">id</span><span style="color:#d4d4d4">=</span><span style="color:#ce9178">"name"</span><span style="color:#d4d4d4"> </span><span style="color:#9cdcfe">placeholder</span><span style="color:#d4d4d4">=</span><span style="color:#ce9178">"Nama Kategori"</span><span style="color:#d4d4d4"> </span><span style="color:#9cdcfe">value</span><span style="color:#d4d4d4">=</span><span style="color:#ce9178">"</span><span style="color:#dcdcaa">{{ old</span><span style="color:#ce9178">('name') </span><span style="color:#dcdcaa">}}</span><span style="color:#ce9178">"</span><span style="color:#808080">&gt;</span></span></div>
<div class="row" style="top:418px"><span class="ln">20</span><i class="ig" style="left:74px"></i><i class="ig" style="left:109px"></i><i class="ig iga" style="left:144px"></i><i class="ig" style="left:180px"></i><i class="ig" style="left:215px"></i><i class="ig" style="left:250px"></i><i class="ig" style="left:285px"></i><span class="code" style="left:320.32px"><span style="color:#569cd6">@error</span><span style="color:#ffd700">(</span><span style="color:#ce9178">'name'</span><span style="color:#ffd700">)</span></span></div>
<div class="row" style="top:440px"><span class="ln">21</span><i class="ig" style="left:74px"></i><i class="ig" style="left:109px"></i><i class="ig iga" style="left:144px"></i><i class="ig" style="left:180px"></i><i class="ig" style="left:215px"></i><i class="ig" style="left:250px"></i><i class="ig" style="left:285px"></i><span class="code" style="left:355.50px"><span style="color:#808080">&lt;</span><span style="color:#569cd6">small</span><span style="color:#d4d4d4"> </span><span style="color:#9cdcfe">class</span><span style="color:#d4d4d4">=</span><span style="color:#ce9178">"text-danger"</span><span style="color:#808080">&gt;</span><span style="color:#ffd700">{</span><span style="color:#da70d6">{</span><span style="color:#d4d4d4"> </span><span style="color:#9cdcfe">$message</span><span style="color:#d4d4d4"> </span><span style="color:#da70d6">}</span><span style="color:#ffd700">}</span><span style="color:#808080">&lt;/</span><span style="color:#569cd6">small</span><span style="color:#808080">&gt;</span></span></div>
<div class="row" style="top:462px"><span class="ln">22</span><i class="ig" style="left:74px"></i><i class="ig" style="left:109px"></i><i class="ig iga" style="left:144px"></i><i class="ig" style="left:180px"></i><i class="ig" style="left:215px"></i><i class="ig" style="left:250px"></i><i class="ig" style="left:285px"></i><span class="code" style="left:320.32px"><span style="color:#569cd6">@enderror</span></span></div>
<div class="row" style="top:484px"><span class="ln">23</span><i class="ig" style="left:74px"></i><i class="ig" style="left:109px"></i><i class="ig iga" style="left:144px"></i><i class="ig" style="left:180px"></i><i class="ig" style="left:215px"></i><i class="ig" style="left:250px"></i><span class="code" style="left:285.13px"><span style="color:#808080">&lt;/</span><span style="color:#569cd6">div</span><span style="color:#808080">&gt;</span></span></div>
<div class="row" style="top:506px"><span class="ln">24</span><i class="ig" style="left:74px"></i><i class="ig" style="left:109px"></i><i class="ig iga" style="left:144px"></i><i class="ig" style="left:180px"></i><i class="ig" style="left:215px"></i><i class="ig" style="left:250px"></i><span class="code" style="left:74.00px"></span></div>
<div class="row" style="top:528px"><span class="ln">25</span><i class="ig" style="left:74px"></i><i class="ig" style="left:109px"></i><i class="ig iga" style="left:144px"></i><i class="ig" style="left:180px"></i><i class="ig" style="left:215px"></i><i class="ig" style="left:250px"></i><span class="code" style="left:285.13px"><span style="color:#6a9955">{{-- Tombol --}}</span></span></div>
<div class="row" style="top:550px"><span class="ln">26</span><i class="ig" style="left:74px"></i><i class="ig" style="left:109px"></i><i class="ig iga" style="left:144px"></i><i class="ig" style="left:180px"></i><i class="ig" style="left:215px"></i><i class="ig" style="left:250px"></i><span class="code" style="left:285.13px"><span style="color:#808080">&lt;</span><span style="color:#569cd6">button</span><span style="color:#d4d4d4"> </span><span style="color:#9cdcfe">type</span><span style="color:#d4d4d4">=</span><span style="color:#ce9178">"submit"</span><span style="color:#d4d4d4"> </span><span style="color:#9cdcfe">class</span><span style="color:#d4d4d4">=</span><span style="color:#ce9178">"btn btn-primary"</span><span style="color:#808080">&gt;</span><span style="color:#d4d4d4">Simpan</span><span style="color:#808080">&lt;/</span><span style="color:#569cd6">button</span><span style="color:#808080">&gt;</span></span></div>
<div class="row" style="top:572px"><span class="ln">27</span><i class="ig" style="left:74px"></i><i class="ig" style="left:109px"></i><i class="ig iga" style="left:144px"></i><i class="ig" style="left:180px"></i><i class="ig" style="left:215px"></i><i class="ig" style="left:250px"></i><span class="code" style="left:285.13px"><span style="color:#808080">&lt;</span><span style="color:#569cd6">a</span><span style="color:#d4d4d4"> </span><span style="color:#9cdcfe">href</span><span style="color:#d4d4d4">=</span><span style="color:#ce9178">"</span><span style="color:#dcdcaa">{{ route</span><span style="color:#ce9178">('category.index') </span><span style="color:#dcdcaa">}}</span><span style="color:#ce9178">"</span><span style="color:#d4d4d4"> </span><span style="color:#9cdcfe">class</span><span style="color:#d4d4d4">=</span><span style="color:#ce9178">"btn btn-warning"</span><span style="color:#808080">&gt;</span><span style="color:#d4d4d4">Kembali</span><span style="color:#808080">&lt;/</span><span style="color:#569cd6">a</span><span style="color:#808080">&gt;</span></span></div>
<div class="row" style="top:594px"><span class="ln">28</span><i class="ig" style="left:74px"></i><i class="ig" style="left:109px"></i><i class="ig iga" style="left:144px"></i><i class="ig" style="left:180px"></i><i class="ig" style="left:215px"></i><span class="code" style="left:249.94px"><span style="color:#808080">&lt;/</span><span style="color:#569cd6">form</span><span style="color:#808080">&gt;</span></span></div>
<div class="row" style="top:616px"><span class="ln">29</span><i class="ig" style="left:74px"></i><i class="ig" style="left:109px"></i><i class="ig iga" style="left:144px"></i><i class="ig" style="left:180px"></i><span class="code" style="left:214.75px"><span style="color:#808080">&lt;/</span><span style="color:#569cd6">div</span><span style="color:#808080">&gt;</span></span></div>
<div class="row" style="top:638px"><span class="ln">30</span><i class="ig" style="left:74px"></i><i class="ig" style="left:109px"></i><i class="ig iga" style="left:144px"></i><span class="code" style="left:179.56px"><span style="color:#808080">&lt;/</span><span style="color:#569cd6">div</span><span style="color:#808080">&gt;</span></span></div>
<svg class="mm" width="102" height="80" viewBox="0 0 102 80" shape-rendering="crispEdges"><rect x="0" y="0.3" width="8" height="1.4" fill="#569cd6" opacity=".42"/><rect x="8" y="0.3" width="1" height="1.4" fill="#ffd700" opacity=".42"/><rect x="9" y="0.3" width="1" height="1.4" fill="#ce9178" opacity=".42"/><rect x="10" y="0.3" width="17" height="1.4" fill="#ce9178" opacity=".42"/><rect x="27" y="0.3" width="1" height="1.4" fill="#ce9178" opacity=".42"/><rect x="28" y="0.3" width="1" height="1.4" fill="#ffd700" opacity=".42"/><rect x="0" y="4.3" width="8" height="1.4" fill="#569cd6" opacity=".42"/><rect x="8" y="4.3" width="1" height="1.4" fill="#ffd700" opacity=".42"/><rect x="9" y="4.3" width="5" height="1.4" fill="#ce9178" opacity=".42"/><rect x="14" y="4.3" width="1" height="1.4" fill="#ffd700" opacity=".42"/><rect x="4" y="6.3" width="4" height="1.4" fill="#6a9955" opacity=".42"/><rect x="9" y="6.3" width="3" height="1.4" fill="#6a9955" opacity=".42"/><rect x="13" y="6.3" width="8" height="1.4" fill="#6a9955" opacity=".42"/><rect x="22" y="6.3" width="4" height="1.4" fill="#6a9955" opacity=".42"/><rect x="0" y="8.3" width="11" height="1.4" fill="#569cd6" opacity=".42"/><rect x="0" y="12.3" width="8" height="1.4" fill="#569cd6" opacity=".42"/><rect x="8" y="12.3" width="1" height="1.4" fill="#ffd700" opacity=".42"/><rect x="9" y="12.3" width="9" height="1.4" fill="#ce9178" opacity=".42"/><rect x="18" y="12.3" width="1" height="1.4" fill="#ffd700" opacity=".42"/><rect x="4" y="14.3" width="1" height="1.4" fill="#808080" opacity=".42"/><rect x="5" y="14.3" width="3" height="1.4" fill="#569cd6" opacity=".42"/><rect x="9" y="14.3" width="5" height="1.4" fill="#9cdcfe" opacity=".42"/><rect x="14" y="14.3" width="1" height="1.4" fill="#d4d4d4" opacity=".42"/><rect x="15" y="14.3" width="6" height="1.4" fill="#ce9178" opacity=".42"/><rect x="21" y="14.3" width="1" height="1.4" fill="#808080" opacity=".42"/><rect x="8" y="16.3" width="1" height="1.4" fill="#808080" opacity=".42"/><rect x="9" y="16.3" width="3" height="1.4" fill="#569cd6" opacity=".42"/><rect x="13" y="16.3" width="5" height="1.4" fill="#9cdcfe" opacity=".42"/><rect x="18" y="16.3" width="1" height="1.4" fill="#d4d4d4" opacity=".42"/><rect x="19" y="16.3" width="11" height="1.4" fill="#ce9178" opacity=".42"/><rect x="30" y="16.3" width="1" height="1.4" fill="#808080" opacity=".42"/><rect x="12" y="18.3" width="1" height="1.4" fill="#808080" opacity=".42"/><rect x="13" y="18.3" width="2" height="1.4" fill="#569cd6" opacity=".42"/><rect x="16" y="18.3" width="5" height="1.4" fill="#9cdcfe" opacity=".42"/><rect x="21" y="18.3" width="1" height="1.4" fill="#d4d4d4" opacity=".42"/><rect x="22" y="18.3" width="11" height="1.4" fill="#ce9178" opacity=".42"/><rect x="34" y="18.3" width="11" height="1.4" fill="#ce9178" opacity=".42"/><rect x="46" y="18.3" width="5" height="1.4" fill="#ce9178" opacity=".42"/><rect x="51" y="18.3" width="1" height="1.4" fill="#808080" opacity=".42"/><rect x="52" y="18" width="22" height="2" fill="#264f78"/><rect x="52" y="18" width="22" height="2" fill="#3a78b8" opacity=".55"/><rect x="74" y="18.3" width="2" height="1.4" fill="#808080" opacity=".42"/><rect x="76" y="18.3" width="2" height="1.4" fill="#569cd6" opacity=".42"/><rect x="78" y="18.3" width="1" height="1.4" fill="#808080" opacity=".42"/><rect x="12" y="20.3" width="1" height="1.4" fill="#808080" opacity=".42"/><rect x="13" y="20.3" width="3" height="1.4" fill="#569cd6" opacity=".42"/><rect x="17" y="20.3" width="5" height="1.4" fill="#9cdcfe" opacity=".42"/><rect x="22" y="20.3" width="1" height="1.4" fill="#d4d4d4" opacity=".42"/><rect x="23" y="20.3" width="6" height="1.4" fill="#ce9178" opacity=".42"/><rect x="29" y="20.3" width="1" height="1.4" fill="#808080" opacity=".42"/><rect x="16" y="22.3" width="1" height="1.4" fill="#808080" opacity=".42"/><rect x="17" y="22.3" width="3" height="1.4" fill="#569cd6" opacity=".42"/><rect x="21" y="22.3" width="5" height="1.4" fill="#9cdcfe" opacity=".42"/><rect x="26" y="22.3" width="1" height="1.4" fill="#d4d4d4" opacity=".42"/><rect x="27" y="22.3" width="11" height="1.4" fill="#ce9178" opacity=".42"/><rect x="38" y="22.3" width="1" height="1.4" fill="#808080" opacity=".42"/><rect x="20" y="24.3" width="1" height="1.4" fill="#808080" opacity=".42"/><rect x="21" y="24.3" width="4" height="1.4" fill="#569cd6" opacity=".42"/><rect x="26" y="24.3" width="6" height="1.4" fill="#9cdcfe" opacity=".42"/><rect x="32" y="24.3" width="1" height="1.4" fill="#d4d4d4" opacity=".42"/><rect x="33" y="24.3" width="1" height="1.4" fill="#ce9178" opacity=".42"/><rect x="34" y="24.3" width="2" height="1.4" fill="#dcdcaa" opacity=".42"/><rect x="37" y="24.3" width="5" height="1.4" fill="#dcdcaa" opacity=".42"/><rect x="42" y="24.3" width="18" height="1.4" fill="#ce9178" opacity=".42"/><rect x="61" y="24.3" width="2" height="1.4" fill="#dcdcaa" opacity=".42"/><rect x="63" y="24.3" width="1" height="1.4" fill="#ce9178" opacity=".42"/><rect x="65" y="24.3" width="6" height="1.4" fill="#9cdcfe" opacity=".42"/><rect x="71" y="24.3" width="1" height="1.4" fill="#d4d4d4" opacity=".42"/><rect x="72" y="24.3" width="6" height="1.4" fill="#ce9178" opacity=".42"/><rect x="78" y="24.3" width="1" height="1.4" fill="#808080" opacity=".42"/><rect x="24" y="26.3" width="5" height="1.4" fill="#569cd6" opacity=".42"/><rect x="24" y="28.3" width="4" height="1.4" fill="#6a9955" opacity=".42"/><rect x="29" y="28.3" width="4" height="1.4" fill="#6a9955" opacity=".42"/><rect x="34" y="28.3" width="4" height="1.4" fill="#6a9955" opacity=".42"/><rect x="24" y="30.3" width="1" height="1.4" fill="#808080" opacity=".42"/><rect x="25" y="30.3" width="3" height="1.4" fill="#569cd6" opacity=".42"/><rect x="29" y="30.3" width="5" height="1.4" fill="#9cdcfe" opacity=".42"/><rect x="34" y="30.3" width="1" height="1.4" fill="#d4d4d4" opacity=".42"/><rect x="35" y="30.3" width="6" height="1.4" fill="#ce9178" opacity=".42"/><rect x="41" y="30.3" width="1" height="1.4" fill="#808080" opacity=".42"/><rect x="28" y="32.3" width="1" height="1.4" fill="#808080" opacity=".42"/><rect x="29" y="32.3" width="5" height="1.4" fill="#569cd6" opacity=".42"/><rect x="35" y="32.3" width="3" height="1.4" fill="#9cdcfe" opacity=".42"/><rect x="38" y="32.3" width="1" height="1.4" fill="#d4d4d4" opacity=".42"/><rect x="39" y="32.3" width="6" height="1.4" fill="#ce9178" opacity=".42"/><rect x="46" y="32.3" width="5" height="1.4" fill="#9cdcfe" opacity=".42"/><rect x="51" y="32.3" width="1" height="1.4" fill="#d4d4d4" opacity=".42"/><rect x="52" y="32.3" width="12" height="1.4" fill="#ce9178" opacity=".42"/><rect x="64" y="32.3" width="1" height="1.4" fill="#808080" opacity=".42"/><rect x="65" y="32.3" width="4" height="1.4" fill="#d4d4d4" opacity=".42"/><rect x="70" y="32.3" width="8" height="1.4" fill="#d4d4d4" opacity=".42"/><rect x="78" y="32.3" width="2" height="1.4" fill="#808080" opacity=".42"/><rect x="80" y="32.3" width="5" height="1.4" fill="#569cd6" opacity=".42"/><rect x="85" y="32.3" width="1" height="1.4" fill="#808080" opacity=".42"/><rect x="28" y="34.3" width="1" height="1.4" fill="#808080" opacity=".42"/><rect x="29" y="34.3" width="5" height="1.4" fill="#569cd6" opacity=".42"/><rect x="35" y="34.3" width="4" height="1.4" fill="#9cdcfe" opacity=".42"/><rect x="39" y="34.3" width="1" height="1.4" fill="#d4d4d4" opacity=".42"/><rect x="40" y="34.3" width="6" height="1.4" fill="#ce9178" opacity=".42"/><rect x="47" y="34.3" width="5" height="1.4" fill="#9cdcfe" opacity=".42"/><rect x="52" y="34.3" width="1" height="1.4" fill="#d4d4d4" opacity=".42"/><rect x="53" y="34.3" width="13" height="1.4" fill="#ce9178" opacity=".42"/><rect x="67" y="34.3" width="6" height="1.4" fill="#569cd6" opacity=".42"/><rect x="73" y="34.3" width="8" height="1.4" fill="#ce9178" opacity=".42"/><rect x="82" y="34.3" width="10" height="1.4" fill="#ce9178" opacity=".42"/><rect x="93" y="34.3" width="9" height="1.4" fill="#569cd6" opacity=".42"/><rect x="102" y="34.3" width="1" height="1.4" fill="#ce9178" opacity=".42"/><rect x="32" y="36.3" width="2" height="1.4" fill="#9cdcfe" opacity=".42"/><rect x="34" y="36.3" width="1" height="1.4" fill="#d4d4d4" opacity=".42"/><rect x="35" y="36.3" width="6" height="1.4" fill="#ce9178" opacity=".42"/><rect x="42" y="36.3" width="11" height="1.4" fill="#9cdcfe" opacity=".42"/><rect x="53" y="36.3" width="1" height="1.4" fill="#d4d4d4" opacity=".42"/><rect x="54" y="36.3" width="5" height="1.4" fill="#ce9178" opacity=".42"/><rect x="60" y="36.3" width="9" height="1.4" fill="#ce9178" opacity=".42"/><rect x="70" y="36.3" width="5" height="1.4" fill="#9cdcfe" opacity=".42"/><rect x="75" y="36.3" width="1" height="1.4" fill="#d4d4d4" opacity=".42"/><rect x="76" y="36.3" width="1" height="1.4" fill="#ce9178" opacity=".42"/><rect x="77" y="36.3" width="2" height="1.4" fill="#dcdcaa" opacity=".42"/><rect x="80" y="36.3" width="3" height="1.4" fill="#dcdcaa" opacity=".42"/><rect x="83" y="36.3" width="8" height="1.4" fill="#ce9178" opacity=".42"/><rect x="92" y="36.3" width="2" height="1.4" fill="#dcdcaa" opacity=".42"/><rect x="94" y="36.3" width="1" height="1.4" fill="#ce9178" opacity=".42"/><rect x="95" y="36.3" width="1" height="1.4" fill="#808080" opacity=".42"/><rect x="28" y="38.3" width="6" height="1.4" fill="#569cd6" opacity=".42"/><rect x="34" y="38.3" width="1" height="1.4" fill="#ffd700" opacity=".42"/><rect x="35" y="38.3" width="6" height="1.4" fill="#ce9178" opacity=".42"/><rect x="41" y="38.3" width="1" height="1.4" fill="#ffd700" opacity=".42"/><rect x="32" y="40.3" width="1" height="1.4" fill="#808080" opacity=".42"/><rect x="33" y="40.3" width="5" height="1.4" fill="#569cd6" opacity=".42"/><rect x="39" y="40.3" width="5" height="1.4" fill="#9cdcfe" opacity=".42"/><rect x="44" y="40.3" width="1" height="1.4" fill="#d4d4d4" opacity=".42"/><rect x="45" y="40.3" width="13" height="1.4" fill="#ce9178" opacity=".42"/><rect x="58" y="40.3" width="1" height="1.4" fill="#808080" opacity=".42"/><rect x="59" y="40.3" width="1" height="1.4" fill="#ffd700" opacity=".42"/><rect x="60" y="40.3" width="1" height="1.4" fill="#da70d6" opacity=".42"/><rect x="62" y="40.3" width="8" height="1.4" fill="#9cdcfe" opacity=".42"/><rect x="71" y="40.3" width="1" height="1.4" fill="#da70d6" opacity=".42"/><rect x="72" y="40.3" width="1" height="1.4" fill="#ffd700" opacity=".42"/><rect x="73" y="40.3" width="2" height="1.4" fill="#808080" opacity=".42"/><rect x="75" y="40.3" width="5" height="1.4" fill="#569cd6" opacity=".42"/><rect x="80" y="40.3" width="1" height="1.4" fill="#808080" opacity=".42"/><rect x="28" y="42.3" width="9" height="1.4" fill="#569cd6" opacity=".42"/><rect x="24" y="44.3" width="2" height="1.4" fill="#808080" opacity=".42"/><rect x="26" y="44.3" width="3" height="1.4" fill="#569cd6" opacity=".42"/><rect x="29" y="44.3" width="1" height="1.4" fill="#808080" opacity=".42"/><rect x="24" y="48.3" width="4" height="1.4" fill="#6a9955" opacity=".42"/><rect x="29" y="48.3" width="6" height="1.4" fill="#6a9955" opacity=".42"/><rect x="36" y="48.3" width="4" height="1.4" fill="#6a9955" opacity=".42"/><rect x="24" y="50.3" width="1" height="1.4" fill="#808080" opacity=".42"/><rect x="25" y="50.3" width="6" height="1.4" fill="#569cd6" opacity=".42"/><rect x="32" y="50.3" width="4" height="1.4" fill="#9cdcfe" opacity=".42"/><rect x="36" y="50.3" width="1" height="1.4" fill="#d4d4d4" opacity=".42"/><rect x="37" y="50.3" width="8" height="1.4" fill="#ce9178" opacity=".42"/><rect x="46" y="50.3" width="5" height="1.4" fill="#9cdcfe" opacity=".42"/><rect x="51" y="50.3" width="1" height="1.4" fill="#d4d4d4" opacity=".42"/><rect x="52" y="50.3" width="4" height="1.4" fill="#ce9178" opacity=".42"/><rect x="57" y="50.3" width="12" height="1.4" fill="#ce9178" opacity=".42"/><rect x="69" y="50.3" width="1" height="1.4" fill="#808080" opacity=".42"/><rect x="70" y="50.3" width="6" height="1.4" fill="#d4d4d4" opacity=".42"/><rect x="76" y="50.3" width="2" height="1.4" fill="#808080" opacity=".42"/><rect x="78" y="50.3" width="6" height="1.4" fill="#569cd6" opacity=".42"/><rect x="84" y="50.3" width="1" height="1.4" fill="#808080" opacity=".42"/><rect x="24" y="52.3" width="1" height="1.4" fill="#808080" opacity=".42"/><rect x="25" y="52.3" width="1" height="1.4" fill="#569cd6" opacity=".42"/><rect x="27" y="52.3" width="4" height="1.4" fill="#9cdcfe" opacity=".42"/><rect x="31" y="52.3" width="1" height="1.4" fill="#d4d4d4" opacity=".42"/><rect x="32" y="52.3" width="1" height="1.4" fill="#ce9178" opacity=".42"/><rect x="33" y="52.3" width="2" height="1.4" fill="#dcdcaa" opacity=".42"/><rect x="36" y="52.3" width="5" height="1.4" fill="#dcdcaa" opacity=".42"/><rect x="41" y="52.3" width="18" height="1.4" fill="#ce9178" opacity=".42"/><rect x="60" y="52.3" width="2" height="1.4" fill="#dcdcaa" opacity=".42"/><rect x="62" y="52.3" width="1" height="1.4" fill="#ce9178" opacity=".42"/><rect x="64" y="52.3" width="5" height="1.4" fill="#9cdcfe" opacity=".42"/><rect x="69" y="52.3" width="1" height="1.4" fill="#d4d4d4" opacity=".42"/><rect x="70" y="52.3" width="4" height="1.4" fill="#ce9178" opacity=".42"/><rect x="75" y="52.3" width="12" height="1.4" fill="#ce9178" opacity=".42"/><rect x="87" y="52.3" width="1" height="1.4" fill="#808080" opacity=".42"/><rect x="88" y="52.3" width="7" height="1.4" fill="#d4d4d4" opacity=".42"/><rect x="95" y="52.3" width="2" height="1.4" fill="#808080" opacity=".42"/><rect x="97" y="52.3" width="1" height="1.4" fill="#569cd6" opacity=".42"/><rect x="98" y="52.3" width="1" height="1.4" fill="#808080" opacity=".42"/><rect x="20" y="54.3" width="2" height="1.4" fill="#808080" opacity=".42"/><rect x="22" y="54.3" width="4" height="1.4" fill="#569cd6" opacity=".42"/><rect x="26" y="54.3" width="1" height="1.4" fill="#808080" opacity=".42"/><rect x="16" y="56.3" width="2" height="1.4" fill="#808080" opacity=".42"/><rect x="18" y="56.3" width="3" height="1.4" fill="#569cd6" opacity=".42"/><rect x="21" y="56.3" width="1" height="1.4" fill="#808080" opacity=".42"/><rect x="12" y="58.3" width="2" height="1.4" fill="#808080" opacity=".42"/><rect x="14" y="58.3" width="3" height="1.4" fill="#569cd6" opacity=".42"/><rect x="17" y="58.3" width="1" height="1.4" fill="#808080" opacity=".42"/><rect x="8" y="60.3" width="2" height="1.4" fill="#808080" opacity=".42"/><rect x="10" y="60.3" width="3" height="1.4" fill="#569cd6" opacity=".42"/><rect x="13" y="60.3" width="1" height="1.4" fill="#808080" opacity=".42"/><rect x="4" y="62.3" width="2" height="1.4" fill="#808080" opacity=".42"/><rect x="6" y="62.3" width="3" height="1.4" fill="#569cd6" opacity=".42"/><rect x="9" y="62.3" width="1" height="1.4" fill="#808080" opacity=".42"/><rect x="0" y="64.3" width="11" height="1.4" fill="#569cd6" opacity=".42"/><rect x="0" y="68.3" width="8" height="1.4" fill="#569cd6" opacity=".42"/><rect x="8" y="68.3" width="1" height="1.4" fill="#ffd700" opacity=".42"/><rect x="9" y="68.3" width="4" height="1.4" fill="#ce9178" opacity=".42"/><rect x="13" y="68.3" width="1" height="1.4" fill="#ffd700" opacity=".42"/><rect x="4" y="70.3" width="4" height="1.4" fill="#6a9955" opacity=".42"/><rect x="9" y="70.3" width="2" height="1.4" fill="#6a9955" opacity=".42"/><rect x="12" y="70.3" width="8" height="1.4" fill="#6a9955" opacity=".42"/><rect x="21" y="70.3" width="4" height="1.4" fill="#6a9955" opacity=".42"/><rect x="0" y="72.3" width="11" height="1.4" fill="#569cd6" opacity=".42"/></svg>
<div id="mmshadow"></div><div id="vtrack"></div><div id="vscroll"></div><div id="vmark"></div>
<div id="hscroll"></div>
</div>

<div id="status"><div id="remote"><svg class="abs" style="left:11px;top:3px" width="14" height="14" viewBox="11 748 14 14" fill="none" stroke="#ffffff" stroke-width="1.200"><path d="M12.900 752.400 17.400 756.400 12.900 760.400 M22 749.200 18.200 752.700 22 756.200"/></svg></div>
<svg class="abs" style="left:40px;top:2px" width="90" height="18" viewBox="40 747 90 18" fill="none" stroke="#cccccc" stroke-width="1.100" stroke-linejoin="round"><circle cx="49" cy="755.200" r="5.700"/><path d="M46.500 752.700 51.500 757.700M51.500 752.700 46.500 757.700"/><path d="M76.100 749.600 81.800 759.500H70.400Z M76.100 753V756.600 M76.100 757.600V758.600"/><path d="M117.500 749.200 113 755.400H116L114 761 119.600 754H116.500L119 749.200Z" stroke-width="1"/></svg>
<span class="t" style="left:59.8px;font-size:12px;font-weight:normal;letter-spacing:-1.088px;">0</span><span class="t" style="left:86.8px;font-size:12px;font-weight:normal;letter-spacing:-1.088px;">0</span>
<span class="t" style="left:788.6px;font-size:12px;font-weight:normal;letter-spacing:-0.200px;">Ln 10, Col 75 (22 selected)</span><span class="t" style="left:943px;font-size:12px;font-weight:normal;letter-spacing:-0.531px;">Spaces: 4</span><span class="t" style="left:1007.8px;font-size:12px;font-weight:normal;letter-spacing:-0.520px;">UTF-8</span><span class="t" style="left:1055px;font-size:12px;font-weight:normal;letter-spacing:-1.236px;">CRLF</span><span class="t" style="left:1099.3px;font-size:12px;font-weight:normal;letter-spacing:1.692px;letter-spacing:2.5px">{}</span><span class="t" style="left:1117.9px;font-size:12px;font-weight:normal;letter-spacing:-0.381px;">Blade</span><span class="t" style="left:1210.1px;font-size:12px;font-weight:normal;letter-spacing:-0.308px;">Go Live</span><span class="t" style="left:1282.7px;font-size:12px;font-weight:normal;letter-spacing:-0.048px;">Prettier</span>
<svg class="abs" style="left:1160px;top:2px" width="200" height="18" viewBox="1160 747 200 18" fill="none" stroke="#cccccc" stroke-width="1.100" stroke-linejoin="round" stroke-linecap="round">
<circle cx="1167.3" cy="751.9" r="2.5" stroke-width="1.6"/><circle cx="1172.7" cy="751.9" r="2.5" stroke-width="1.6"/>
<path d="M1165 753.6C1163.6 754.6 1163.2 755.6 1163.2 757 1163.2 759 1166.4 760.5 1170 760.5 1173.600 760.5 1176.800 759 1176.800 757 1176.800 755.6 1176.400 754.6 1175 753.6" stroke-width="1.6"/>
<path d="M1168.6 756V758.2M1171.400 756V758.2" stroke-width="1.3"/>
<path d="M1199.7 754.3V761" stroke-width="1.7"/><circle cx="1199.7" cy="753.8" r="1.2" fill="#cccccc" stroke="none"/>
<path d="M1197.6 756.8A3 3 0 1 1 1201.800 756.8 M1196 758.6A5.400 5.400 0 1 1 1203.400 758.6" stroke-width="1.200"/>
<circle cx="1271.900" cy="755.300" r="5.900"/><path d="M1267.800 759.400 1276 751.200"/>
<path d="M1344.100 750.300C1341.600 750.300 1340.300 752.200 1340.300 754.300V757L1339 758.800H1349.200L1347.900 757V754.300C1347.900 752.200 1346.600 750.300 1344.100 750.300Z M1342.800 759.300C1342.800 761 1345.400 761 1345.400 759.300"/></svg>
</div>
<div id="bottom"></div>
</body></html>
